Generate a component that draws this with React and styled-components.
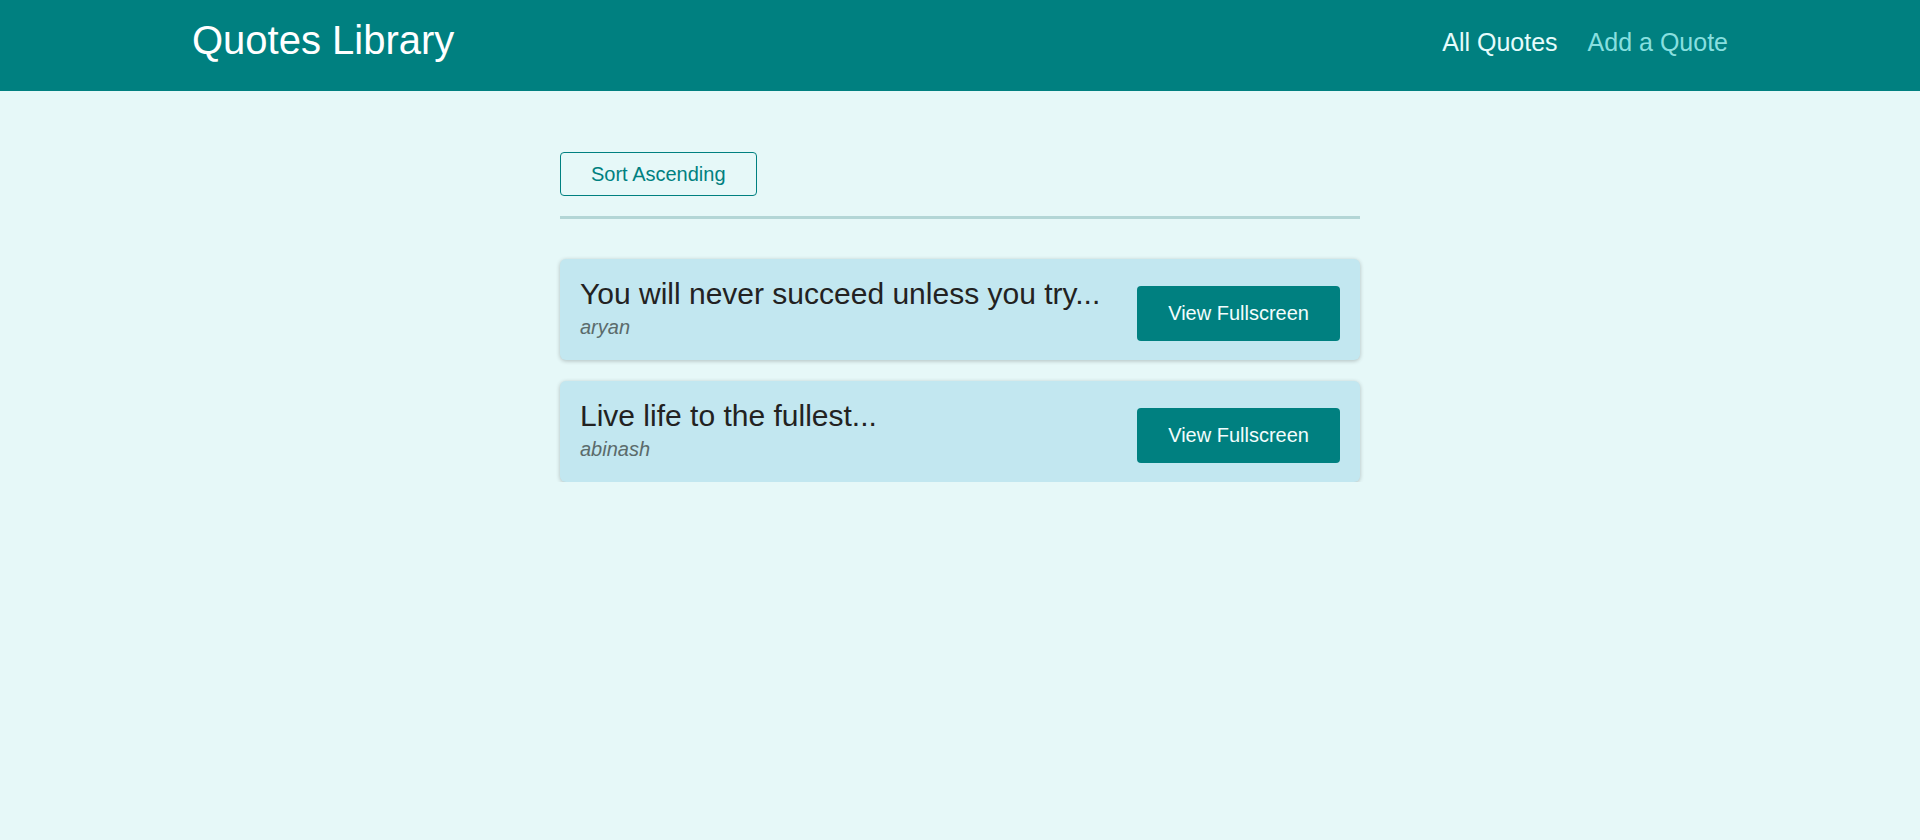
import React from "react";
import styled, { createGlobalStyle } from "styled-components";

const GlobalStyle = createGlobalStyle`
  * { box-sizing: border-box; }
  html, body {
    margin: 0;
    padding: 0;
    background: #e6f8f8;
    font-family: "Liberation Sans", Arial, sans-serif;
  }
`;

const Header = styled.header`
  height: 91px;
  background: #008080;
  padding: 0 10%;
  display: flex;
  align-items: center;
  justify-content: space-between;
`;

const Logo = styled.div`
  color: #ffffff;
  font-size: 40px;
  margin-bottom: 10px;
`;

const Nav = styled.nav`
  display: flex;
  gap: 30px;
  margin-bottom: 7px;
`;

const NavLink = styled.a`
  font-size: 25px;
  text-decoration: none;
  color: ${(p) => (p.$active ? "#e6fcfc" : "#88dfdf")};
  cursor: pointer;
`;

const Main = styled.main`
  width: 800px;
  margin: 61px auto 0;
`;

const SortBar = styled.div`
  padding-bottom: 20px;
  border-bottom: 3px solid #b3d6d6;
`;

const SortButton = styled.button`
  font-family: inherit;
  font-size: 20px;
  line-height: 22px;
  color: #008080;
  background: transparent;
  border: 1px solid #008080;
  border-radius: 4px;
  padding: 10px 30px;
  cursor: pointer;
`;

const List = styled.ul`
  list-style: none;
  margin: 40px 0 0;
  padding: 0;
  display: flex;
  flex-direction: column;
  gap: 21px;
`;

const Card = styled.li`
  background: #c2e7f0;
  border-radius: 6px;
  box-shadow: 0 1px 4px rgba(0, 0, 0, 0.24);
  padding: 18px 16px 21px 20px;
  display: flex;
  align-items: flex-start;
  justify-content: space-between;
`;

const TextBlock = styled.figure`
  margin: 0;
`;

const QuoteText = styled.blockquote`
  margin: 0;
  font-size: 30px;
  line-height: 34px;
  color: #222222;
`;

const Author = styled.figcaption`
  margin-top: 5px;
  font-size: 20px;
  line-height: 23px;
  font-style: italic;
  color: #5b6b6b;
`;

const ViewButton = styled.a`
  margin: 9px 4px -2px 0;
  background: #008080;
  color: #f2fdfd;
  font-size: 20px;
  line-height: 23px;
  padding: 16px 31px;
  border-radius: 4px;
  text-decoration: none;
  cursor: pointer;
`;

const quotes = [
  { id: 1, text: "You will never succeed unless you try...", author: "aryan" },
  { id: 2, text: "Live life to the fullest...", author: "abinash" },
];

export default function App() {
  return (
    <>
      <GlobalStyle />
      <Header>
        <Logo>Quotes Library</Logo>
        <Nav>
          <NavLink $active>All Quotes</NavLink>
          <NavLink>Add a Quote</NavLink>
        </Nav>
      </Header>
      <Main>
        <SortBar>
          <SortButton>Sort Ascending</SortButton>
        </SortBar>
        <List>
          {quotes.map((q) => (
            <Card key={q.id}>
              <TextBlock>
                <QuoteText>{q.text}</QuoteText>
                <Author>{q.author}</Author>
              </TextBlock>
              <ViewButton>View Fullscreen</ViewButton>
            </Card>
          ))}
        </List>
      </Main>
    </>
  );
}
